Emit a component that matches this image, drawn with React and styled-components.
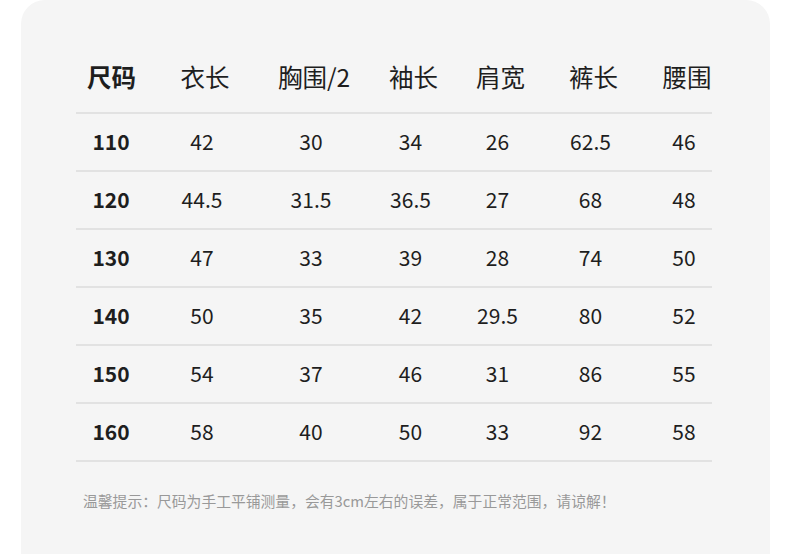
import React from "react";
import styled, { createGlobalStyle } from "styled-components";

const Global = createGlobalStyle`
  html, body { margin: 0; padding: 0; background: #ffffff; }
  body { font-family: "Noto Sans CJK SC", "Noto Sans", sans-serif; }
`;

const Card = styled.div`
  margin: 0 20px 0 21px;
  min-height: 580px;
  background: #f5f5f5;
  border-radius: 24px 24px 0 0;
  padding: 44px 58px 0 55px;
  box-sizing: border-box;
`;

const Row = styled.div`
  display: flex;
  align-items: center;
  box-sizing: content-box;
  height: ${(p) => (p.$head ? 66 : 54)}px;
  padding: 0 0 2px ${(p) => (p.$head ? 11 : 13)}px;
  border-bottom: 2px solid #e2e2e2;
`;

const Cell = styled.div`
  flex: 0 0 ${(p) => p.$w}px;
  display: flex;
  justify-content: center;
  white-space: nowrap;
  color: #1e1e1e;
  font-size: ${(p) => (p.$head ? 24.5 : 21)}px;
  font-weight: ${(p) => (p.$bold ? 700 : 400)};
  line-height: 1;
`;

const Note = styled.p`
  margin: 28px 0 0 7px;
  font-size: 14.8px;
  line-height: 22px;
  color: #999999;
`;

const widths = [44, 138, 80, 119, 55, 131, 56];
const head = ["尺码", "衣长", "胸围/2", "袖长", "肩宽", "裤长", "腰围"];
const rows = [
  ["110", "42", "30", "34", "26", "62.5", "46"],
  ["120", "44.5", "31.5", "36.5", "27", "68", "48"],
  ["130", "47", "33", "39", "28", "74", "50"],
  ["140", "50", "35", "42", "29.5", "80", "52"],
  ["150", "54", "37", "46", "31", "86", "55"],
  ["160", "58", "40", "50", "33", "92", "58"],
];

export default function App() {
  return (
    <>
      <Global />
      <Card>
        <Row $head>
          {head.map((h, i) => (
            <Cell key={h} $w={widths[i]} $head $bold={i === 0}>
              {h}
            </Cell>
          ))}
        </Row>
        {rows.map((r) => (
          <Row key={r[0]}>
            {r.map((v, i) => (
              <Cell key={i} $w={widths[i]} $bold={i === 0}>
                {v}
              </Cell>
            ))}
          </Row>
        ))}
        <Note>温馨提示：尺码为手工平铺测量，会有3cm左右的误差，属于正常范围，请谅解！</Note>
      </Card>
    </>
  );
}
